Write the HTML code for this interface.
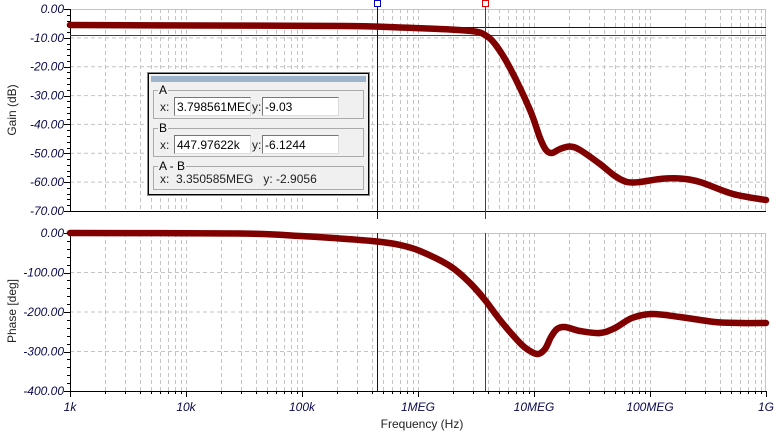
<!DOCTYPE html>
<html><head><meta charset="utf-8"><style>
body{margin:0;width:775px;height:432px;background:#fff;overflow:hidden;font-family:"Liberation Sans",sans-serif;position:relative}
svg{position:absolute;left:0;top:0}
.dlg{position:absolute;left:148px;top:73px;width:219px;height:120px;border:1px solid #000;background:#f0f0f0;outline:1px solid #888}
.tb{position:absolute;left:2px;top:2px;right:2px;height:6px;background:#9db4cc}
.g{position:absolute;left:4px;right:4px;border:1px solid #aaa;height:27px}
.g .t{position:absolute;left:4px;top:-8px;background:#f0f0f0;font-size:12px;padding:0 1px;line-height:14px}
.l{position:absolute;font-size:12px;top:9px;line-height:14px;color:#222}
.in{position:absolute;top:6px;height:19px;background:#fff;border:1px solid #777;border-right-color:#ddd;border-bottom-color:#ddd;font-size:12px;line-height:19px;padding-left:2px;box-sizing:border-box;overflow:hidden;white-space:nowrap}
</style></head><body>
<svg id="s" width="775" height="432" xmlns="http://www.w3.org/2000/svg" font-family="Liberation Sans, sans-serif"></svg>
<div class="dlg"><div class="tb"></div>
<div class="g" style="top:16px"><span class="t">A</span><span class="l" style="left:6px">x:</span><div class="in" style="left:20px;width:77px">3.798561MEG</div><span class="l" style="left:98px">y:</span><div class="in" style="left:108px;width:77px">-9.03</div></div>
<div class="g" style="top:54px"><span class="t">B</span><span class="l" style="left:6px">x:</span><div class="in" style="left:20px;width:77px">447.97622k</div><span class="l" style="left:98px">y:</span><div class="in" style="left:108px;width:77px">-6.1244</div></div>
<div class="g" style="top:92px;height:22px"><span class="t">A - B</span><span class="l" style="left:6px;top:5px">x:&nbsp;&nbsp;3.350585MEG&nbsp;&nbsp;&nbsp;y: -2.9056</span></div>
</div>
<script>
var s=document.getElementById('s'),h='';
var X0=70,D=116;
function lx(f){return X0+Math.log10(f)*D;}
function panel(top,bot,n){
 for(var i=1;i<n;i++){var y=top+(bot-top)*i/n;h+='<line x1="70" x2="766" y1="'+y+'" y2="'+y+'" stroke="#c4c4c4" stroke-dasharray="4,3"/>';}
 for(var d=0;d<6;d++)for(var k=1;k<=9;k++){if(d==0&&k==1)continue;var x=Math.round(lx(Math.pow(10,d)*k))+0.5;h+='<line x1="'+x+'" x2="'+x+'" y1="'+top+'" y2="'+bot+'" stroke="#c4c4c4" stroke-dasharray="4,3"/>';}
 h+='<line x1="70" x2="766" y1="'+(top+.5)+'" y2="'+(top+.5)+'" stroke="#c4c4c4"/><line x1="765.5" x2="765.5" y1="'+top+'" y2="'+bot+'" stroke="#c4c4c4"/>';
 h+='<line x1="70.5" x2="70.5" y1="'+top+'" y2="'+bot+'" stroke="#000"/><line x1="70" x2="766" y1="'+(bot+.5)+'" y2="'+(bot+.5)+'" stroke="#000"/>';
 for(var i=0;i<=n*5;i++){var y=Math.round(top+(bot-top)*i/(n*5))+.5;var L=i%5==0?6:3;h+='<line x1="'+(70-L)+'" x2="70" y1="'+y+'" y2="'+y+'" stroke="#000"/>';}
}
panel(9,211,7);panel(233,391,4);
for(var d=0;d<7;d++)for(var k=1;k<=9;k++){if(d==6&&k>1)break;var x=Math.round(lx(Math.pow(10,d)*k))+.5;var L=k==1?6:3;h+='<line x1="'+x+'" x2="'+x+'" y1="391" y2="'+(391+L)+'" stroke="#000"/>';}
var lab=['0.00','-10.00','-20.00','-30.00','-40.00','-50.00','-60.00','-70.00'];
lab.forEach(function(t,i){h+='<text x="64" y="'+(13+i*28.86)+'" text-anchor="end" font-size="12" font-style="italic" fill="#0a0a50">'+t+'</text>';});
['0.00','-100.00','-200.00','-300.00','-400.00'].forEach(function(t,i){h+='<text x="64" y="'+(237+i*39.5)+'" text-anchor="end" font-size="12" font-style="italic" fill="#0a0a50">'+t+'</text>';});
['1k','10k','100k','1MEG','10MEG','100MEG','1G'].forEach(function(t,i){h+='<text x="'+(70+i*116)+'" y="411" text-anchor="middle" font-size="12" font-style="italic" fill="#0a0a50">'+t+'</text>';});
h+='<text x="422" y="428" text-anchor="middle" font-size="12" fill="#222">Frequency (Hz)</text>';
h+='<text transform="translate(16,110) rotate(-90)" text-anchor="middle" font-size="12" fill="#222">Gain (dB)</text>';
h+='<text transform="translate(16,311) rotate(-90)" text-anchor="middle" font-size="12" fill="#222">Phase [deg]</text>';
h+='<line x1="70" x2="766" y1="27.5" y2="27.5" stroke="#0000c0"/><line x1="70" x2="766" y1="35.5" y2="35.5" stroke="#e00000"/>';
h+='<line x1="377.5" x2="377.5" y1="0" y2="219" stroke="#0000c0"/><line x1="377.5" x2="377.5" y1="233" y2="391" stroke="#0000c0"/>';
h+='<line x1="485.5" x2="485.5" y1="0" y2="219" stroke="#e00000"/><line x1="485.5" x2="485.5" y1="233" y2="391" stroke="#e00000"/>';
h+='<rect x="374.5" y="0.5" width="6" height="6" fill="#fff" stroke="#0000c0"/><rect x="482.5" y="0.5" width="6" height="6" fill="#fff" stroke="#e00000"/>';
function cr(pts){var d='M'+pts[0][0]+','+pts[0][1];for(var i=0;i<pts.length-1;i++){var p0=pts[i-1]||pts[i],p1=pts[i],p2=pts[i+1],p3=pts[i+2]||p2;
 d+=' C'+(p1[0]+(p2[0]-p0[0])/6).toFixed(1)+','+(p1[1]+(p2[1]-p0[1])/6).toFixed(1)+' '+(p2[0]-(p3[0]-p1[0])/6).toFixed(1)+','+(p2[1]-(p3[1]-p1[1])/6).toFixed(1)+' '+p2[0]+','+p2[1];}return d;}
var g=[[70,25],[200,25.5],[345,26],[400,27.5],[450,29.5],[475,31.5],[485,35],[495,44],[510,68],[530,110],[540,138],[546,150],[552,153],[560,149],[570,146.5],[580,150],[600,164],[615,176],[627,182],[640,182],[660,179],[680,178.5],[700,182],[733,194],[766,200]];
var p=[[70,233],[240,233.5],[300,236],[340,238.5],[377,241.5],[400,245],[420,251],[450,266],[470,283],[485,300],[500,320],[520,343],[530,351],[538,354],[545,349],[551,337],[557,329],[565,327],[580,331],[600,333],[615,328],[632,318],[652,314],[680,317],[715,322],[740,323],[766,323]];
h+='<path d="'+cr(g)+'" fill="none" stroke="#800000" stroke-width="6.5" stroke-linejoin="round" stroke-linecap="round"/>';
h+='<path d="'+cr(p)+'" fill="none" stroke="#800000" stroke-width="6.5" stroke-linejoin="round" stroke-linecap="round"/>';
s.innerHTML=h;
</script>
</body></html>
